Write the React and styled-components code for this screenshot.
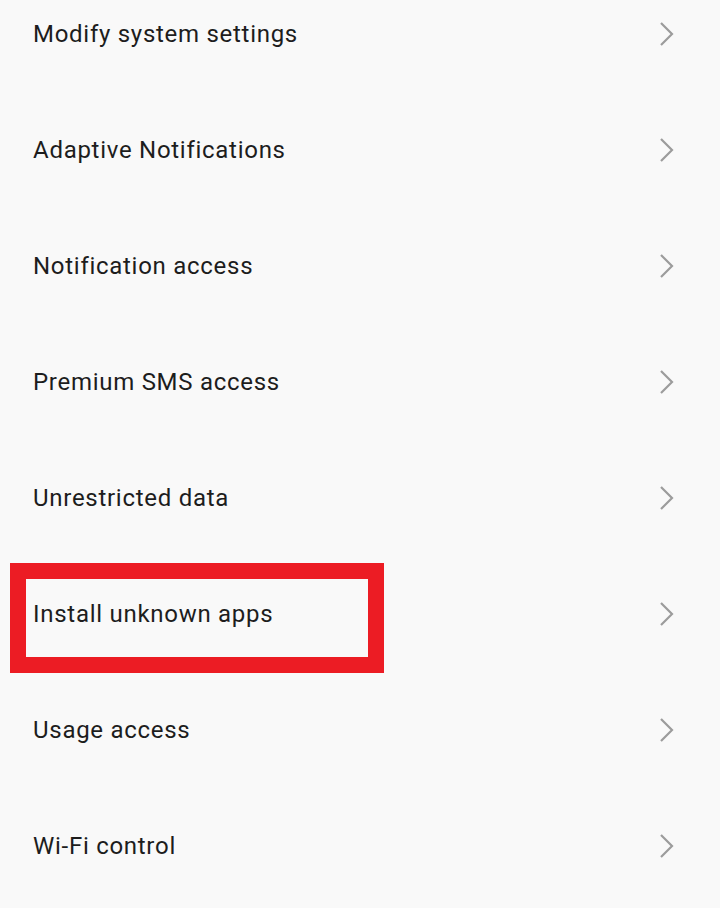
import React from 'react';
import styled, { createGlobalStyle } from 'styled-components';

const GlobalStyle = createGlobalStyle`
    body {
        margin: 0;
        background: #f9f9f9;
        font-family: Roboto, "Noto Sans", sans-serif;
    }
`;

const List = styled.div`
    display: flex;
    flex-direction: column;
    margin-top: -24px;
`;

const Row = styled.div`
    position: relative;
    height: 116px;
    display: flex;
    align-items: center;
    justify-content: space-between;
    padding: 0 45px 0 33px;
`;

const Label = styled.span`
    font-size: 24px;
    color: #1d1d1d;
    letter-spacing: 0.72px;
`;

const Highlight = styled.div`
    position: absolute;
    left: 10px;
    top: 7px;
    width: 374px;
    height: 110px;
    box-sizing: border-box;
    border: 16.5px solid #ec1c24;
    pointer-events: none;
`;

const Chevron = () => (
    <svg width="16" height="26" viewBox="0 0 16 26">
        <path d="M2 2 L13 13 L2 24" fill="none" stroke="#9c9c9c" strokeWidth="2.2" />
    </svg>
);

const items = [
    'Modify system settings',
    'Adaptive Notifications',
    'Notification access',
    'Premium SMS access',
    'Unrestricted data',
    'Install unknown apps',
    'Usage access',
    'Wi-Fi control',
];

const App = () => {
    return (
        <>
            <GlobalStyle />
            <List>
                {items.map((title) => (
                    <Row key={title}>
                        <Label>{title}</Label>
                        <Chevron />
                        {title === 'Install unknown apps' && <Highlight />}
                    </Row>
                ))}
            </List>
        </>
    );
};

export default App;
